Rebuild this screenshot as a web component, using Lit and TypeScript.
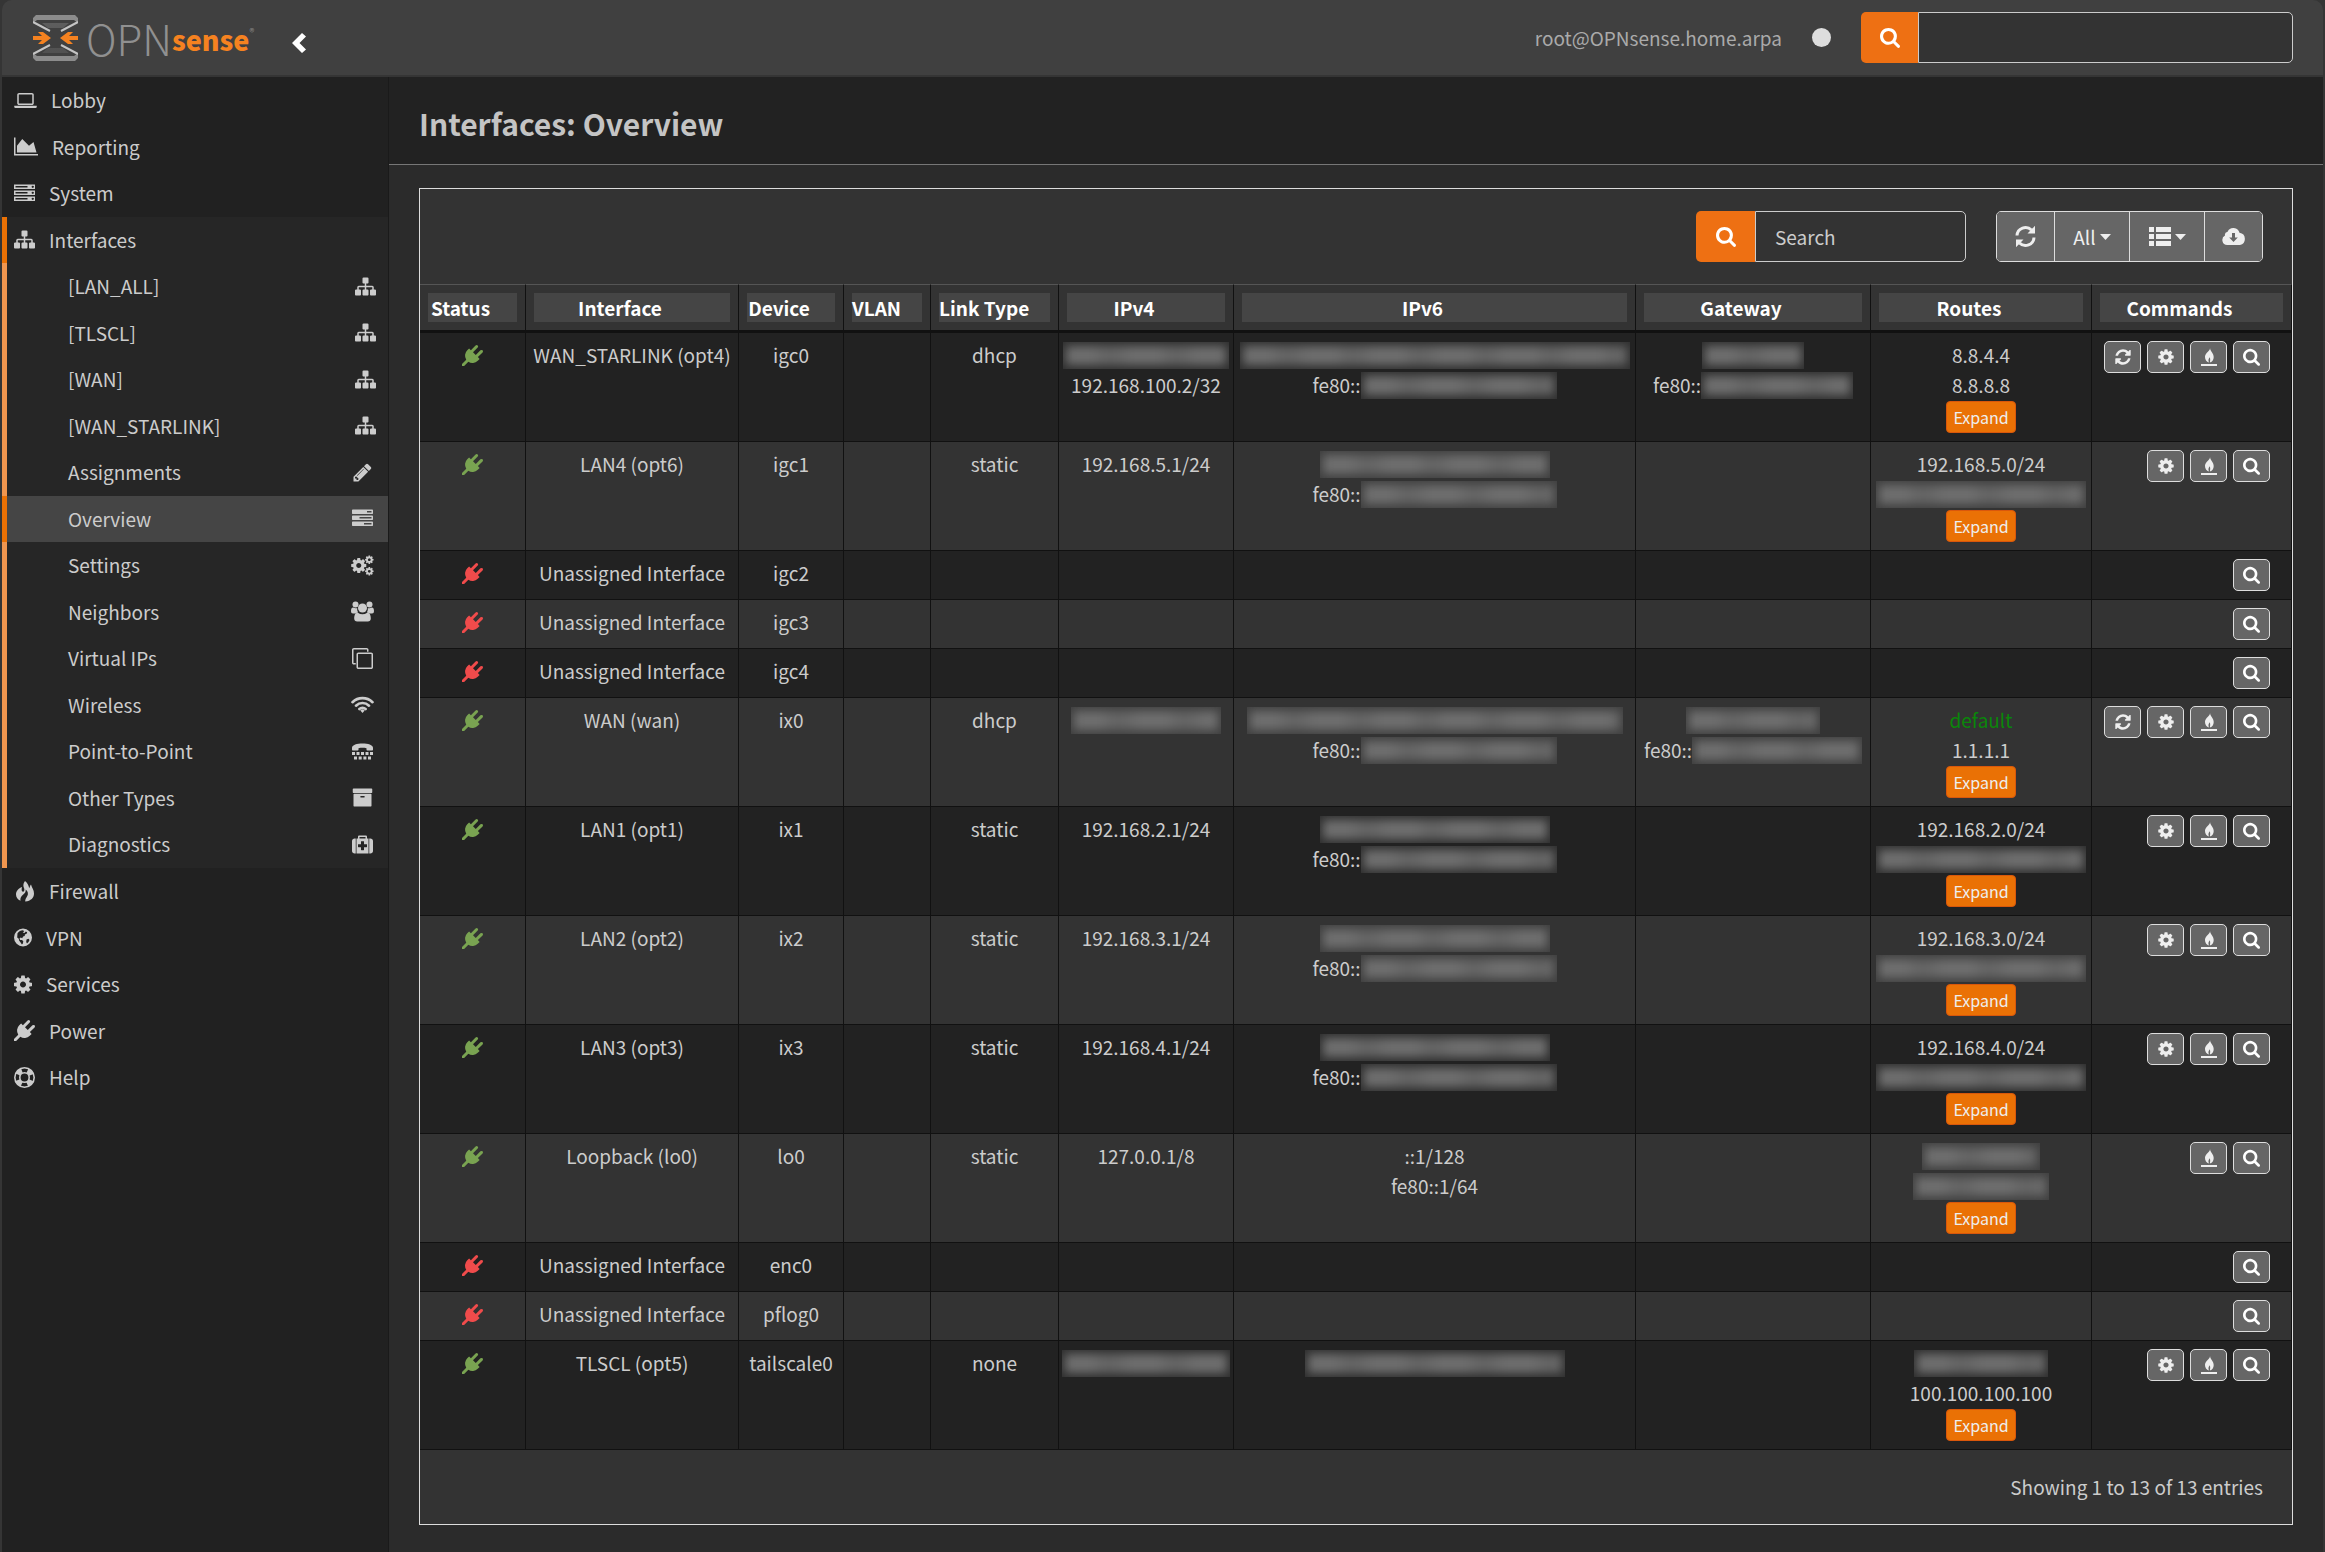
import { LitElement, html, css, svg, nothing } from "lit";
import type { TemplateResult } from "lit";
import { customElement, property } from "lit/decorators.js";
import { classMap } from "lit/directives/class-map.js";
import { styleMap } from "lit/directives/style-map.js";

/* ---------- icons ---------- */

const GEAR =
  "M1152 896q0-106-75-181t-181-75-181 75-75 181 75 181 181 75 181-75 75-181zm512-109v222q0 12-8 23t-20 13l-185 28q-19 54-39 91 35 50 107 138 10 12 10 25t-9 23q-27 37-99 108t-94 71q-12 0-26-9l-138-108q-44 23-91 38-16 136-29 186-7 28-36 28h-222q-14 0-24.5-8.5t-11.5-21.5l-28-184q-49-16-90-37l-141 107q-10 9-25 9-14 0-25-11-126-114-165-168-7-10-7-23 0-12 8-23 15-21 51-66.5t54-70.5q-27-50-41-99l-183-27q-13-2-21-12.5t-8-23.5v-222q0-12 8-23t19-13l186-28q14-46 39-92-40-57-107-138-10-12-10-24 0-10 9-23 26-36 98.5-107.5t94.5-71.5q13 0 26 10l138 107q44-23 91-38 16-136 29-186 7-28 36-28h222q14 0 24.5 8.5t11.5 21.5l28 184q49 16 90 37l142-107q9-9 24-9 13 0 25 10 129 119 165 170 7 8 7 22 0 12-8 23-15 21-51 66.5t-54 70.5q26 50 41 98l183 28q13 2 21 12.5t8 23.5z";

interface Glyph {
  box: [number, number, number, number];
  art: TemplateResult;
}

const p = (d: string) => svg`<path d=${d}></path>`;

const GLYPHS: Record<string, Glyph> = {
  laptop: {
    box: [0, 0, 1920, 1792],
    art: p(
      "M416 1280q-66 0-113-47t-47-113v-704q0-66 47-113t113-47h1088q66 0 113 47t47 113v704q0 66-47 113t-113 47h-1088zm-32-864v704q0 13 9.500 22.500t22.500 9.500h1088q13 0 22.500-9.500t9.500-22.500v-704q0-13-9.500-22.500t-22.500-9.500h-1088q-13 0-22.500 9.500t-9.500 22.500zm1376 928h160v96q0 40-47 68t-113 28h-1600q-66 0-113-28t-47-68v-96h1760z"
    ),
  },
  chart: {
    box: [0, 0, 2048, 1792],
    art: p("M2048 1536v128h-2048v-1536h128v1408h1920zm-384-1024l256 896h-1664v-576l448-576 576 576z"),
  },
  server: {
    box: [0, 0, 1792, 1792],
    art: p(
      "M128 1408h1024v-128h-1024v128zm0-512h1024v-128h-1024v128zm1568 448q0-40-28-68t-68-28-68 28-28 68 28 68 68 28 68-28 28-68zm-1568-960h1024v-128h-1024v128zm1568 448q0-40-28-68t-68-28-68 28-28 68 28 68 68 28 68-28 28-68zm0-512q0-40-28-68t-68-28-68 28-28 68 28 68 68 28 68-28 28-68zm96 832v384h-1792v-384h1792zm0-512v384h-1792v-384h1792zm0-512v384h-1792v-384h1792z"
    ),
  },
  sitemap: {
    box: [0, 0, 1792, 1792],
    art: p(
      "M1792 1248v320q0 40-28 68t-68 28h-320q-40 0-68-28t-28-68v-320q0-40 28-68t68-28h96v-192h-512v192h96q40 0 68 28t28 68v320q0 40-28 68t-68 28h-320q-40 0-68-28t-28-68v-320q0-40 28-68t68-28h96v-192h-512v192h96q40 0 68 28t28 68v320q0 40-28 68t-68 28h-320q-40 0-68-28t-28-68v-320q0-40 28-68t68-28h96v-192q0-52 38-90t90-38h512v-192h-96q-40 0-68-28t-28-68v-320q0-40 28-68t68-28h320q40 0 68 28t28 68v320q0 40-28 68t-68 28h-96v192h512q52 0 90 38t38 90v192h96q40 0 68 28t28 68z"
    ),
  },
  pencil: {
    box: [0, 0, 1792, 1792],
    art: p(
      "M491 1536l91-91-235-235-91 91v107h128v128h107zm523-928q0-22-22-22-10 0-17 7l-542 542q-7 7-7 17 0 22 22 22 10 0 17-7l542-542q7-7 7-17zm-54-192l416 416-832 832h-416v-416zm683 96q0 53-37 90l-166 166-416-416 166-165q36-38 90-38 53 0 91 38l235 234q37 39 37 91z"
    ),
  },
  tasks: {
    box: [0, 0, 1792, 1792],
    art: p(
      "M1024 1408h640v-128h-640v128zm-384-512h1024v-128h-1024v128zm640-512h384v-128h-384v128zm512 832v256q0 26-19 45t-45 19h-1664q-26 0-45-19t-19-45v-256q0-26 19-45t45-19h1664q26 0 45 19t19 45zm0-512v256q0 26-19 45t-45 19h-1664q-26 0-45-19t-19-45v-256q0-26 19-45t45-19h1664q26 0 45 19t19 45zm0-512v256q0 26-19 45t-45 19h-1664q-26 0-45-19t-19-45v-256q0-26 19-45t45-19h1664q26 0 45 19t19 45z"
    ),
  },
  cogs: {
    box: [0, 0, 1920, 1792],
    art: svg`<path transform="translate(-112 144) scale(.84)" d=${GEAR}></path>
      <path transform="translate(1120 -20) scale(.47)" d=${GEAR}></path>
      <path transform="translate(1120 970) scale(.47)" d=${GEAR}></path>`,
  },
  users: {
    box: [0, 0, 23, 21],
    art: svg`<circle cx="4.500" cy="3.500" r="3"></circle><circle cx="18.500" cy="3.500" r="3"></circle>
      <circle cx="11.500" cy="7" r="4.500"></circle>
      <path d="M0 10c0-2.500 1-3.600 2.200-3.500 1.600.9 2.900.9 4 .5-.2 1.800.2 3.200 1 4.300-1 .1-2 .5-2.700 1.200H2C.700 12.500 0 11.700 0 10zM23 10c0-2.500-1-3.600-2.200-3.500-1.600.9-2.900.9-4 .5.2 1.800-.2 3.200-1 4.300 1 .1 2 .5 2.700 1.200H21c1.300 0 2-.8 2-2.500zM3.200 17.500c0-3.400 1-5.800 3.600-5.800 3 2 6.400 2 9.400 0 2.600 0 3.600 2.400 3.600 5.800 0 1.900-1.200 3-3 3H6.200c-1.800 0-3-1.100-3-3z"></path>`,
  },
  clone: {
    box: [0, 0, 1792, 1792],
    art: p(
      "M1664 1632v-1088q0-13-9.500-22.500t-22.500-9.500h-1088q-13 0-22.500 9.500t-9.500 22.500v1088q0 13 9.500 22.500t22.500 9.500h1088q13 0 22.500-9.500t9.500-22.500zm128-1088v1088q0 66-47 113t-113 47h-1088q-66 0-113-47t-47-113v-1088q0-66 47-113t113-47h1088q66 0 113 47t47 113zm-384-384v160h-128v-160q0-13-9.500-22.500t-22.500-9.500h-1088q-13 0-22.500 9.500t-9.500 22.500v1088q0 13 9.500 22.500t22.500 9.500h160v128h-160q-66 0-113-47t-47-113v-1088q0-66 47-113t113-47h1088q66 0 113 47t47 113z"
    ),
  },
  wifi: {
    box: [0, 0, 23, 21],
    art: svg`<g fill="none" stroke="currentColor" stroke-width="2.600" stroke-linecap="round">
      <path d="M1.500 8.200a14.300 14.300 0 0 1 20 0M5 11.700a9.300 9.300 0 0 1 13 0M8.400 15a4.500 4.500 0 0 1 6.200 0"></path></g>
      <path d="M9.300 16.400a3 3 0 0 1 4.400 0L11.500 19z"></path>`,
  },
  tty: {
    box: [0, 0, 21, 21],
    art: svg`<path d="M0 8.500V6.800C0 4 5 2.500 10.500 2.500S21 4 21 6.800v1.700c0 .6-.4 1-1 1h-4.500c-.6 0-1-.4-1-1V7.300c-2.600-.6-5.400-.6-8 0v1.200c0 .6-.4 1-1 1H1c-.6 0-1-.4-1-1z"></path>
      <path d="M0 11h3v3H0zM4.500 11h3v3h-3zM9 11h3v3H9zM13.500 11h3v3h-3zM18 11h3v3h-3zM2 15.500h3v3H2zM6.700 15.500h3v3h-3zM11.400 15.500h3v3h-3zM16 15.500h3v3h-3z"></path>`,
  },
  archive: {
    box: [0, 0, 1792, 1792],
    art: p(
      "M1088 832q0-26-19-45t-45-19h-256q-26 0-45 19t-19 45 19 45 45 19h256q26 0 45-19t19-45zm576-192v960q0 26-19 45t-45 19h-1408q-26 0-45-19t-19-45v-960q0-26 19-45t45-19h1408q26 0 45 19t19 45zm64-448v256q0 26-19 45t-45 19h-1536q-26 0-45-19t-19-45v-256q0-26 19-45t45-19h1536q26 0 45 19t19 45z"
    ),
  },
  medkit: {
    box: [0, 0, 1792, 1792],
    art: p(
      "M1280 1088v-192q0-14-9-23t-23-9h-224v-224q0-14-9-23t-23-9h-192q-14 0-23 9t-9 23v224h-224q-14 0-23 9t-9 23v192q0 14 9 23t23 9h224v224q0 14 9 23t23 9h192q14 0 23-9t9-23v-224h224q14 0 23-9t9-23zm-640-704h512v-128h-512v128zm-320 0v1280h-96q-92 0-158-66t-66-158v-832q0-92 66-158t158-66h96zm1088 0v1280h-1024v-1280h128v-160q0-40 28-68t68-28h576q40 0 68 28t28 68v160h128zm384 224v832q0 92-66 158t-158 66h-96v-1280h96q92 0 158 66t66 158z"
    ),
  },
  flames: {
    box: [-2, 0, 21, 21],
    art: p(
      "M9 0c-2.500 3.500-1.500 5.500-.8 7.500.6 1.900-.3 3.300-1.200 3.200-1.600-.2-1.600-2.400-1-4.700C2.500 7.500 0 10 0 13.500c0 2.800 1.800 5.200 4.500 6.200C4 17.500 5 15.500 7 13.800c2-1.600 3-3 2.700-5.300 2.300 2 3 4.500 1.300 7-1 1.500-1.800 3-1.800 5 5.800-.5 8.800-3.800 8.800-8 0-3.500-2-5.500-3-9-1 1-1 2.500-1.800 3.800C12.500 4 11.500 2 9 0z"
    ),
  },
  globe: {
    box: [0, 0, 18, 21],
    art: svg`<path fill-rule="evenodd" d="M9 1.500a9 9 0 1 0 0 18 9 9 0 0 0 0-18zM3.500 6.200c1.400-1.900 3.300-2.900 5.500-3l1.200 1-1.500 1.300 1.800.5 1.300-1.600 1.400.9-.6 1.500-1.700.8-.2 1.500-1.600.5-.9 1.700-1.500-.7-1.200.9.700 1.400 1.800.2 1.300 1.100-.4 2.300-1 .9-1.300-2-1.500-1.900-.3-1.700-1.600-1.400zM12.500 12.500l2-.8 1 1.200c-.5 1.400-1.300 2.600-2.500 3.500l-.8-1.500z"></path>`,
  },
  cog: { box: [128, 0, 1536, 1792], art: p(GEAR) },
  cogSquare: { box: [0, 0, 1792, 1792], art: p(GEAR) },
  plug: {
    box: [0, 0, 1792, 1792],
    art: p(
      "M1755 453q37 38 37 90.500t-37 90.500l-401 400 150 150-160 160q-163 163-389.500 186.500t-411.500-100.500l-362 362h-181v-181l362-362q-124-185-100.500-411.500t186.500-389.500l160-160 150 150 400-401q38-37 91-37t90 37 37 90.500-37 90.500l-400 401 234 234 401-400q38-37 91-37t90 37z"
    ),
  },
  ring: {
    box: [0, 0, 21, 21],
    art: svg`<g fill="none" stroke="currentColor">
      <circle cx="10.500" cy="10.500" r="9.700" stroke-width="1.600"></circle>
      <circle cx="10.500" cy="10.500" r="4.700" stroke-width="1.600"></circle>
      <circle cx="10.500" cy="10.500" r="7.300" stroke-width="5" stroke-dasharray="5.730 5.730" stroke-dashoffset="-2.870"></circle></g>`,
  },
  search: {
    box: [64, 64, 1664, 1728],
    art: p(
      "M1216 832q0-185-131.500-316.500t-316.500-131.500-316.500 131.500-131.500 316.500 131.500 316.500 316.500 131.500 316.500-131.500 131.500-316.500zm512 832q0 52-38 90t-90 38q-54 0-90-38l-343-342q-179 124-399 124-143 0-273.500-55.500t-225-150-150-225-55.500-273.500 55.500-273.500 150-225 225-150 273.500-55.500 273.500 55.500 225 150 150 225 55.500 273.500q0 220-124 399l343 343q37 37 37 90z"
    ),
  },
  refresh: {
    box: [0, 0, 1792, 1792],
    art: p(
      "M1639 1056q0 5-1 7-64 268-268 434.500t-478 166.500q-146 0-282.500-55t-243.500-157l-129 129q-19 19-45 19t-45-19-19-45v-448q0-26 19-45t45-19h448q26 0 45 19t19 45-19 45l-137 137q71 66 161 102t187 36q134 0 250-65t186-179q11-17 53-117 8-23 30-23h192q13 0 22.500 9.500t9.500 22.500zm25-800v448q0 26-19 45t-45 19h-448q-26 0-45-19t-19-45 19-45l138-138q-148-137-349-137-134 0-250 65t-186 179q-11 17-53 117-8 23-30 23h-199q-13 0-22.500-9.500t-9.500-22.500v-7q65-268 270-434.500t480-166.500q146 0 284 55.500t245 156.500l130-129q19-19 45-19t45 19 19 45z"
    ),
  },
  arrows: {
    box: [0, 0, 21, 23],
    art: svg`<g fill="none" stroke="currentColor" stroke-width="3">
      <path d="M2 10.500A8.500 8.500 0 0 1 16.500 5M19 12.500A8.500 8.500 0 0 1 4.500 18"></path></g>
      <path d="M12.500 8.500H20V.800zM8.500 14.500H1v7.700z"></path>`,
  },
  list: {
    box: [0, 0, 22, 21],
    art: p("M0 1h5v5H0zM7 1h15v5H7zM0 8h5v5H0zM7 8h15v5H7zM0 15h5v5H0zM7 15h15v5H7z"),
  },
  cloud: {
    box: [0, 0, 23, 19],
    art: svg`<path fill-rule="evenodd" d="M18 18H5.200A5 5 0 0 1 3 8.600 3.300 3.300 0 0 1 5.600 4.700 6.300 6.300 0 0 1 17.500 5.800 6.200 6.200 0 0 1 18 18zM10 6v4.500H7.200L11.500 15l4.300-4.500H13V6z"></path>`,
  },
  flame: {
    box: [0, 0, 16, 18],
    art: p(
      "M9 0c.4 3-5 4.600-5 9 0 2.600 1.400 4.600 4 5.600-1-2-.6-3.600.8-5.300.5 1.600.5 2.800.1 5.200 2.600-.8 3.800-3 3.800-5.500C12.700 5.200 9.500 4 9 0zM0 16h16v2H0z"
    ),
  },
  caret: { box: [0, 0, 11, 6], art: p("M0 0h11L5.500 6z") },
  chevron: { box: [0, 0, 14, 20], art: p("M10 0l4 3.500L7.500 10l6.500 6.500-4 3.500L0 10z") },
};

@customElement("ui-icon")
class UiIcon extends LitElement {
  @property() name = "";
  @property({ type: Number }) size = 21;

  static styles = css`
    :host {
      display: inline-flex;
      flex: none;
    }
    .glyph {
      display: block;
      fill: currentColor;
    }
  `;

  render() {
    const g = GLYPHS[this.name];
    if (!g) return nothing;
    const [x, y, w, h] = g.box;
    return html`<svg
      class="glyph"
      aria-hidden="true"
      viewBox="${x} ${y} ${w} ${h}"
      width=${Math.round((this.size * w) / h)}
      height=${this.size}
    >
      ${g.art}
    </svg>`;
  }
}

/* ---------- data ---------- */

interface MenuItem {
  label: string;
  icon: string;
  active?: boolean;
  children?: MenuItem[];
}

const MENU: MenuItem[] = [
  { label: "Lobby", icon: "laptop" },
  { label: "Reporting", icon: "chart" },
  { label: "System", icon: "server" },
  {
    label: "Interfaces",
    icon: "sitemap",
    children: [
      { label: "[LAN_ALL]", icon: "sitemap" },
      { label: "[TLSCL]", icon: "sitemap" },
      { label: "[WAN]", icon: "sitemap" },
      { label: "[WAN_STARLINK]", icon: "sitemap" },
      { label: "Assignments", icon: "pencil" },
      { label: "Overview", icon: "tasks", active: true },
      { label: "Settings", icon: "cogs" },
      { label: "Neighbors", icon: "users" },
      { label: "Virtual IPs", icon: "clone" },
      { label: "Wireless", icon: "wifi" },
      { label: "Point-to-Point", icon: "tty" },
      { label: "Other Types", icon: "archive" },
      { label: "Diagnostics", icon: "medkit" },
    ],
  },
  { label: "Firewall", icon: "flames" },
  { label: "VPN", icon: "globe" },
  { label: "Services", icon: "cog" },
  { label: "Power", icon: "plug" },
  { label: "Help", icon: "ring" },
];

/** One line of a cell: visible text, followed by a masked stretch of the given width. */
interface Line {
  text?: string;
  mask?: number;
  ok?: boolean;
}

interface Row {
  up: boolean;
  name: string;
  device: string;
  link?: string;
  ipv4?: Line[];
  ipv6?: Line[];
  gateway?: Line[];
  routes?: Line[];
  commands: string[];
}

const t = (text: string): Line => ({ text });
const m = (mask: number, text?: string): Line => ({ mask, text });

const FULL = ["refresh", "cogSquare", "flame", "search"];
const STATIC = ["cogSquare", "flame", "search"];
const unassigned = (device: string): Row => ({
  up: false,
  name: "Unassigned Interface",
  device,
  commands: ["search"],
});
const lan = (name: string, device: string, net: number): Row => ({
  up: true,
  name,
  device,
  link: "static",
  ipv4: [t(`192.168.${net}.1/24`)],
  ipv6: [m(230), m(196, "fe80::")],
  routes: [t(`192.168.${net}.0/24`), m(210)],
  commands: STATIC,
});

const ROWS: Row[] = [
  {
    up: true,
    name: "WAN_STARLINK (opt4)",
    device: "igc0",
    link: "dhcp",
    ipv4: [m(166), t("192.168.100.2/32")],
    ipv6: [m(390), m(196, "fe80::")],
    gateway: [m(102), m(152, "fe80::")],
    routes: [t("8.8.4.4"), t("8.8.8.8")],
    commands: FULL,
  },
  lan("LAN4 (opt6)", "igc1", 5),
  unassigned("igc2"),
  unassigned("igc3"),
  unassigned("igc4"),
  {
    up: true,
    name: "WAN (wan)",
    device: "ix0",
    link: "dhcp",
    ipv4: [m(150)],
    ipv6: [m(376), m(196, "fe80::")],
    gateway: [m(134), m(170, "fe80::")],
    routes: [{ text: "default", ok: true }, t("1.1.1.1")],
    commands: FULL,
  },
  lan("LAN1 (opt1)", "ix1", 2),
  lan("LAN2 (opt2)", "ix2", 3),
  lan("LAN3 (opt3)", "ix3", 4),
  {
    up: true,
    name: "Loopback (lo0)",
    device: "lo0",
    link: "static",
    ipv4: [t("127.0.0.1/8")],
    ipv6: [t("::1/128"), t("fe80::1/64")],
    routes: [m(118), m(136)],
    commands: ["flame", "search"],
  },
  unassigned("enc0"),
  unassigned("pflog0"),
  {
    up: true,
    name: "TLSCL (opt5)",
    device: "tailscale0",
    link: "none",
    ipv4: [m(168)],
    ipv6: [m(260)],
    routes: [m(134), t("100.100.100.100")],
    commands: STATIC,
  },
];

const COLUMNS: [string, string][] = [
  ["Status", "c-status"],
  ["Interface", "c-name"],
  ["Device", "c-device"],
  ["VLAN", "c-vlan"],
  ["Link Type", "c-link"],
  ["IPv4", "c-ipv4"],
  ["IPv6", "c-ipv6"],
  ["Gateway", "c-gateway"],
  ["Routes", "c-routes"],
  ["Commands", "c-commands"],
];

const COMMAND_LABELS: Record<string, string> = {
  refresh: "Reload",
  cogSquare: "Settings",
  flame: "Firewall rules",
  search: "Details",
};

/* ---------- sidebar ---------- */

@customElement("side-menu")
class SideMenu extends LitElement {
  static styles = css`
    :host {
      display: block;
      background: #212121;
      border-right: 1px solid #1a1a1a;
    }
    .menu,
    .sub {
      list-style: none;
      margin: 0;
      padding: 0;
    }
    .link {
      box-sizing: border-box;
      display: flex;
      align-items: center;
      gap: 14px;
      height: 46px;
      padding: 0 12px 1px;
      color: #ccc;
      text-decoration: none;
      line-height: 28px;
      white-space: nowrap;
    }
    .item:nth-child(odd) > .link {
      height: 47px;
    }
    .open {
      background: #262626;
    }
    .open > .link {
      border-left: 5px solid #ea7105;
      padding-left: 7px;
    }
    .sub .link {
      justify-content: space-between;
      border-left: 5px solid #f0964f;
      padding-left: 61px;
    }
    .sub .active {
      background: #454545;
      border-left-color: #ea7105;
    }
    .tail {
      display: flex;
      justify-content: center;
      width: 27px;
    }
    .tail.end {
      justify-content: flex-end;
    }
  `;

  private sub(item: MenuItem) {
    const tail = { tail: true, end: item.icon === "sitemap" };
    return html`<li class="item">
      <a class=${classMap({ link: true, active: !!item.active })} href="#">
        <span>${item.label}</span>
        <span class=${classMap(tail)}><ui-icon name=${item.icon}></ui-icon></span>
      </a>
    </li>`;
  }

  render() {
    return html`<nav aria-label="Main">
      <ul class="menu">
        ${MENU.map(
          (item) => html`<li class=${classMap({ item: true, open: !!item.children })}>
            <a class="link" href="#"><ui-icon name=${item.icon}></ui-icon><span>${item.label}</span></a>
            ${item.children
              ? html`<ul class="sub">
                  ${item.children.map((c) => this.sub(c))}
                </ul>`
              : nothing}
          </li>`
        )}
      </ul>
    </nav>`;
  }
}

/* ---------- interface table ---------- */

@customElement("interface-table")
class InterfaceTable extends LitElement {
  static styles = css`
    :host {
      display: block;
    }
    .grid {
      width: 100%;
      table-layout: fixed;
      border-collapse: separate;
      border-spacing: 0;
    }
    .c-status { width: 106px; }
    .c-name { width: 213px; }
    .c-device { width: 105px; }
    .c-vlan { width: 87px; }
    .c-link { width: 128px; }
    .c-ipv4 { width: 175px; }
    .c-gateway { width: 235px; }
    .c-routes { width: 221px; }
    .c-commands { width: 200px; }
    .head {
      box-sizing: border-box;
      padding: 8px;
      border-top: 1px solid #555;
      border-right: 1px solid #111;
      border-bottom: 3px solid #111;
      font-weight: 700;
      color: #fff;
    }
    .title {
      display: block;
      padding-right: 24px;
      background: #454545;
      line-height: 29px;
      text-align: center;
      white-space: nowrap;
    }
    .cell {
      box-sizing: border-box;
      height: 49px;
      padding: 7px 0;
      border-right: 1px solid #111;
      border-bottom: 1px solid #111;
      text-align: center;
      vertical-align: top;
      line-height: 30px;
      white-space: nowrap;
    }
    .row {
      background: #333;
    }
    .row:nth-child(odd) {
      background: #222;
    }
    .tall .cell {
      height: 109px;
    }
    .line {
      display: flex;
      align-items: center;
      justify-content: center;
      height: 30px;
    }
    .ok {
      color: #0a860a;
    }
    .plug {
      color: #79a351;
    }
    .plug.down {
      color: #f04b4b;
    }
    .mask {
      box-sizing: border-box;
      height: 27px;
      padding: 4px 3px;
      overflow: hidden;
      background: #fff1;
    }
    .smear {
      display: block;
      height: 19px;
      filter: blur(5px);
      background: repeating-linear-gradient(90deg, #6e6e6e 0 26px, #656565 38px 50px, #6e6e6e 66px);
    }
    .expand {
      display: block;
      box-sizing: border-box;
      height: 32px;
      margin: 1px auto 0;
      padding: 0 6px;
      border: 1px solid #d9570b;
      border-radius: 4px;
      background: #ea7105;
      color: #eee;
      font: inherit;
      font-size: 16px;
      line-height: 28px;
    }
    .actions {
      display: flex;
      justify-content: flex-end;
      gap: 6px;
      padding: 1px 21px 0 0;
    }
    .action {
      display: flex;
      align-items: center;
      justify-content: center;
      box-sizing: border-box;
      width: 37px;
      height: 32px;
      padding: 0;
      border: 1px solid #ddd;
      border-radius: 5px;
      background: #666;
      color: #eee;
    }
    .action.search {
      color: #fff;
    }
  `;

  private lines(lines?: Line[]) {
    return (lines ?? []).map(
      (l) => html`<div class=${classMap({ line: true, ok: !!l.ok })}>
        ${l.text ? html`<span>${l.text}</span>` : nothing}
        ${l.mask
          ? html`<span class="mask" style=${styleMap({ width: `${l.mask}px` })}><span class="smear"></span></span>`
          : nothing}
      </div>`
    );
  }

  private row(r: Row) {
    return html`<tr class=${classMap({ row: true, tall: !!r.routes })}>
      <td class="cell">
        <div class="line">
          <ui-icon
            class=${classMap({ plug: true, down: !r.up })}
            name="plug"
            role="img"
            aria-label=${r.up ? "up" : "down"}
          ></ui-icon>
        </div>
      </td>
      <td class="cell">${r.name}</td>
      <td class="cell">${r.device}</td>
      <td class="cell"></td>
      <td class="cell">${r.link ?? nothing}</td>
      <td class="cell">${this.lines(r.ipv4)}</td>
      <td class="cell">${this.lines(r.ipv6)}</td>
      <td class="cell">${this.lines(r.gateway)}</td>
      <td class="cell">
        ${this.lines(r.routes)}
        ${r.routes ? html`<button class="expand" type="button">Expand</button>` : nothing}
      </td>
      <td class="cell">
        <div class="actions">
          ${r.commands.map(
            (c) => html`<button
              class=${classMap({ action: true, search: c === "search" })}
              type="button"
              aria-label=${COMMAND_LABELS[c]}
            >
              <ui-icon name=${c} size="18"></ui-icon>
            </button>`
          )}
        </div>
      </td>
    </tr>`;
  }

  render() {
    return html`<table class="grid">
      <thead>
        <tr>
          ${COLUMNS.map(
            ([label, cls]) => html`<th class="head ${cls}" scope="col"><span class="title">${label}</span></th>`
          )}
        </tr>
      </thead>
      <tbody>
        ${ROWS.map((r) => this.row(r))}
      </tbody>
    </table>`;
  }
}

/* ---------- page ---------- */

@customElement("app-root")
class AppRoot extends LitElement {
  static styles = css`
    :host {
      display: flex;
      flex-direction: column;
      box-sizing: border-box;
      min-height: 100vh;
      padding: 0 2px;
      background: #353535;
      color: #ccc;
      font-family: "Noto Sans CJK SC", "Open Sans", sans-serif;
      font-size: 19px;
    }
    .topbar {
      box-sizing: border-box;
      display: flex;
      align-items: center;
      height: 77px;
      padding: 0 30px 0 31px;
      border-bottom: 2px solid #353535;
      border-radius: 10px 10px 0 0;
      background: #404040;
    }
    .brand {
      display: flex;
      align-items: center;
      height: 46px;
      text-decoration: none;
      line-height: 46px;
    }
    .logo {
      display: block;
      margin-right: 8px;
    }
    .opn {
      color: #909090;
      font-size: 42px;
      font-weight: 300;
    }
    .sense {
      padding-top: 5px;
      color: #f58220;
      font-size: 27px;
      font-weight: 900;
    }
    .mark {
      align-self: flex-start;
      color: #888;
      font-size: 10px;
      line-height: 34px;
    }
    .collapse {
      display: flex;
      margin: 10px auto 0 38px;
      padding: 0;
      border: 0;
      background: none;
      color: #fff;
    }
    .user {
      color: #aaa;
      line-height: 28px;
    }
    .dot {
      width: 19px;
      height: 19px;
      margin: 0 30px;
      border-radius: 50%;
      background: #ddd;
    }
    .search {
      display: flex;
      height: 51px;
    }
    .go {
      display: flex;
      align-items: center;
      justify-content: center;
      width: 59px;
      padding: 0;
      border: 0;
      border-radius: 5px 0 0 5px;
      background: #ee7013;
      color: #fff;
    }
    .go.narrow {
      width: 57px;
    }
    .field {
      box-sizing: border-box;
      min-width: 0;
      width: 211px;
      padding: 0 19px;
      border: 1px solid #ccc;
      border-radius: 0 5px 5px 0;
      background: #333;
      color: #ccc;
      font: inherit;
    }
    .field::placeholder {
      color: #ccc;
      opacity: 1;
    }
    .field.wide {
      width: 375px;
    }
    .body {
      display: grid;
      grid-template-columns: 387px minmax(0, 1fr);
      flex: 1;
    }
    .main {
      background: #2b2b2b;
    }
    .heading {
      box-sizing: border-box;
      height: 88px;
      margin: 0;
      padding: 0 30px;
      border-bottom: 1px solid #777;
      background: #222;
      color: #c4c4c4;
      font-size: 30px;
      font-weight: 700;
      line-height: 92px;
    }
    .panel {
      margin: 23px 30px 27px;
      border: 1px solid #ddd;
      background: #333;
    }
    .tools {
      display: flex;
      justify-content: flex-end;
      gap: 30px;
      padding: 22px 29px 22px;
    }
    .group {
      display: flex;
      height: 51px;
      border: 1px solid #ddd;
      border-radius: 5px;
      box-sizing: border-box;
      overflow: hidden;
    }
    .tool {
      display: flex;
      align-items: center;
      justify-content: center;
      gap: 4px;
      width: 75px;
      padding: 0;
      border: 0;
      border-left: 1px solid #ddd;
      background: #666;
      color: #eee;
      font: inherit;
    }
    .tool.small {
      width: 58px;
    }
    .tool:first-child {
      width: 57px;
      border-left: 0;
    }
    .summary {
      margin: 0;
      padding: 23px 29px;
      text-align: right;
      line-height: 28px;
    }
  `;

  private logo() {
    return html`<svg class="logo" width="45" height="46" viewBox="0 0 45 46" aria-hidden="true">
        <defs>
          <linearGradient id="steel" x1="0" y1="0" x2="0" y2="1">
            <stop offset="0" stop-color="#8a8a8a"></stop>
            <stop offset="1" stop-color="#6a6a6a"></stop>
          </linearGradient>
        </defs>
        <path d="M3 0h39l3 3v5l-4-3H4L0 8V3z" fill="#8c8c8c"></path>
        <path d="M3 46h39l3-3v-5l-4 3H4l-4-3v5z" fill="#8c8c8c"></path>
        <path d="M9 8h27l-6 5H15zM9 38h27l-6-5H15z" fill="url(#steel)" opacity=".4"></path>
        <g fill="none" stroke="#c4c4c4" stroke-width="2">
          <path d="M0 7l17 9M45 7l-17 9M0 39l17-9M45 39l-17-9"></path>
        </g>
        <path
          d="M0 21h9l-4-4h5l8 6-8 6H5l4-4H0zM45 21h-9l4-4h-5l-8 6 8 6h5l-4-4h9z"
          fill="#f58220"
        ></path>
      </svg>
      <span class="opn">OPN</span><span class="sense">sense</span><span class="mark">®</span>`;
  }

  render() {
    return html`
      <header class="topbar">
        <a class="brand" href="#">${this.logo()}</a>
        <button class="collapse" type="button" aria-label="Toggle sidebar">
          <ui-icon name="chevron" size="20"></ui-icon>
        </button>
        <span class="user">root@OPNsense.home.arpa</span>
        <span class="dot"></span>
        <form class="search" role="search">
          <button class="go narrow" type="button" aria-label="Search menu"><ui-icon name="search"></ui-icon></button>
          <input class="field wide" type="text" aria-label="Search menu" />
        </form>
      </header>
      <div class="body">
        <side-menu></side-menu>
        <main class="main">
          <h1 class="heading">Interfaces: Overview</h1>
          <section class="panel">
            <div class="tools">
              <div class="search">
                <button class="go" type="button" aria-label="Search"><ui-icon name="search"></ui-icon></button>
                <input class="field" type="text" placeholder="Search" aria-label="Search interfaces" />
              </div>
              <div class="group">
                <button class="tool small" type="button" aria-label="Refresh">
                  <ui-icon name="arrows" size="23"></ui-icon>
                </button>
                <button class="tool" type="button">All<ui-icon name="caret" size="6"></ui-icon></button>
                <button class="tool" type="button" aria-label="Columns">
                  <ui-icon name="list"></ui-icon><ui-icon name="caret" size="6"></ui-icon>
                </button>
                <button class="tool small" type="button" aria-label="Download">
                  <ui-icon name="cloud" size="19"></ui-icon>
                </button>
              </div>
            </div>
            <interface-table></interface-table>
            <p class="summary">Showing 1 to 13 of 13 entries</p>
          </section>
        </main>
      </div>
    `;
  }
}
